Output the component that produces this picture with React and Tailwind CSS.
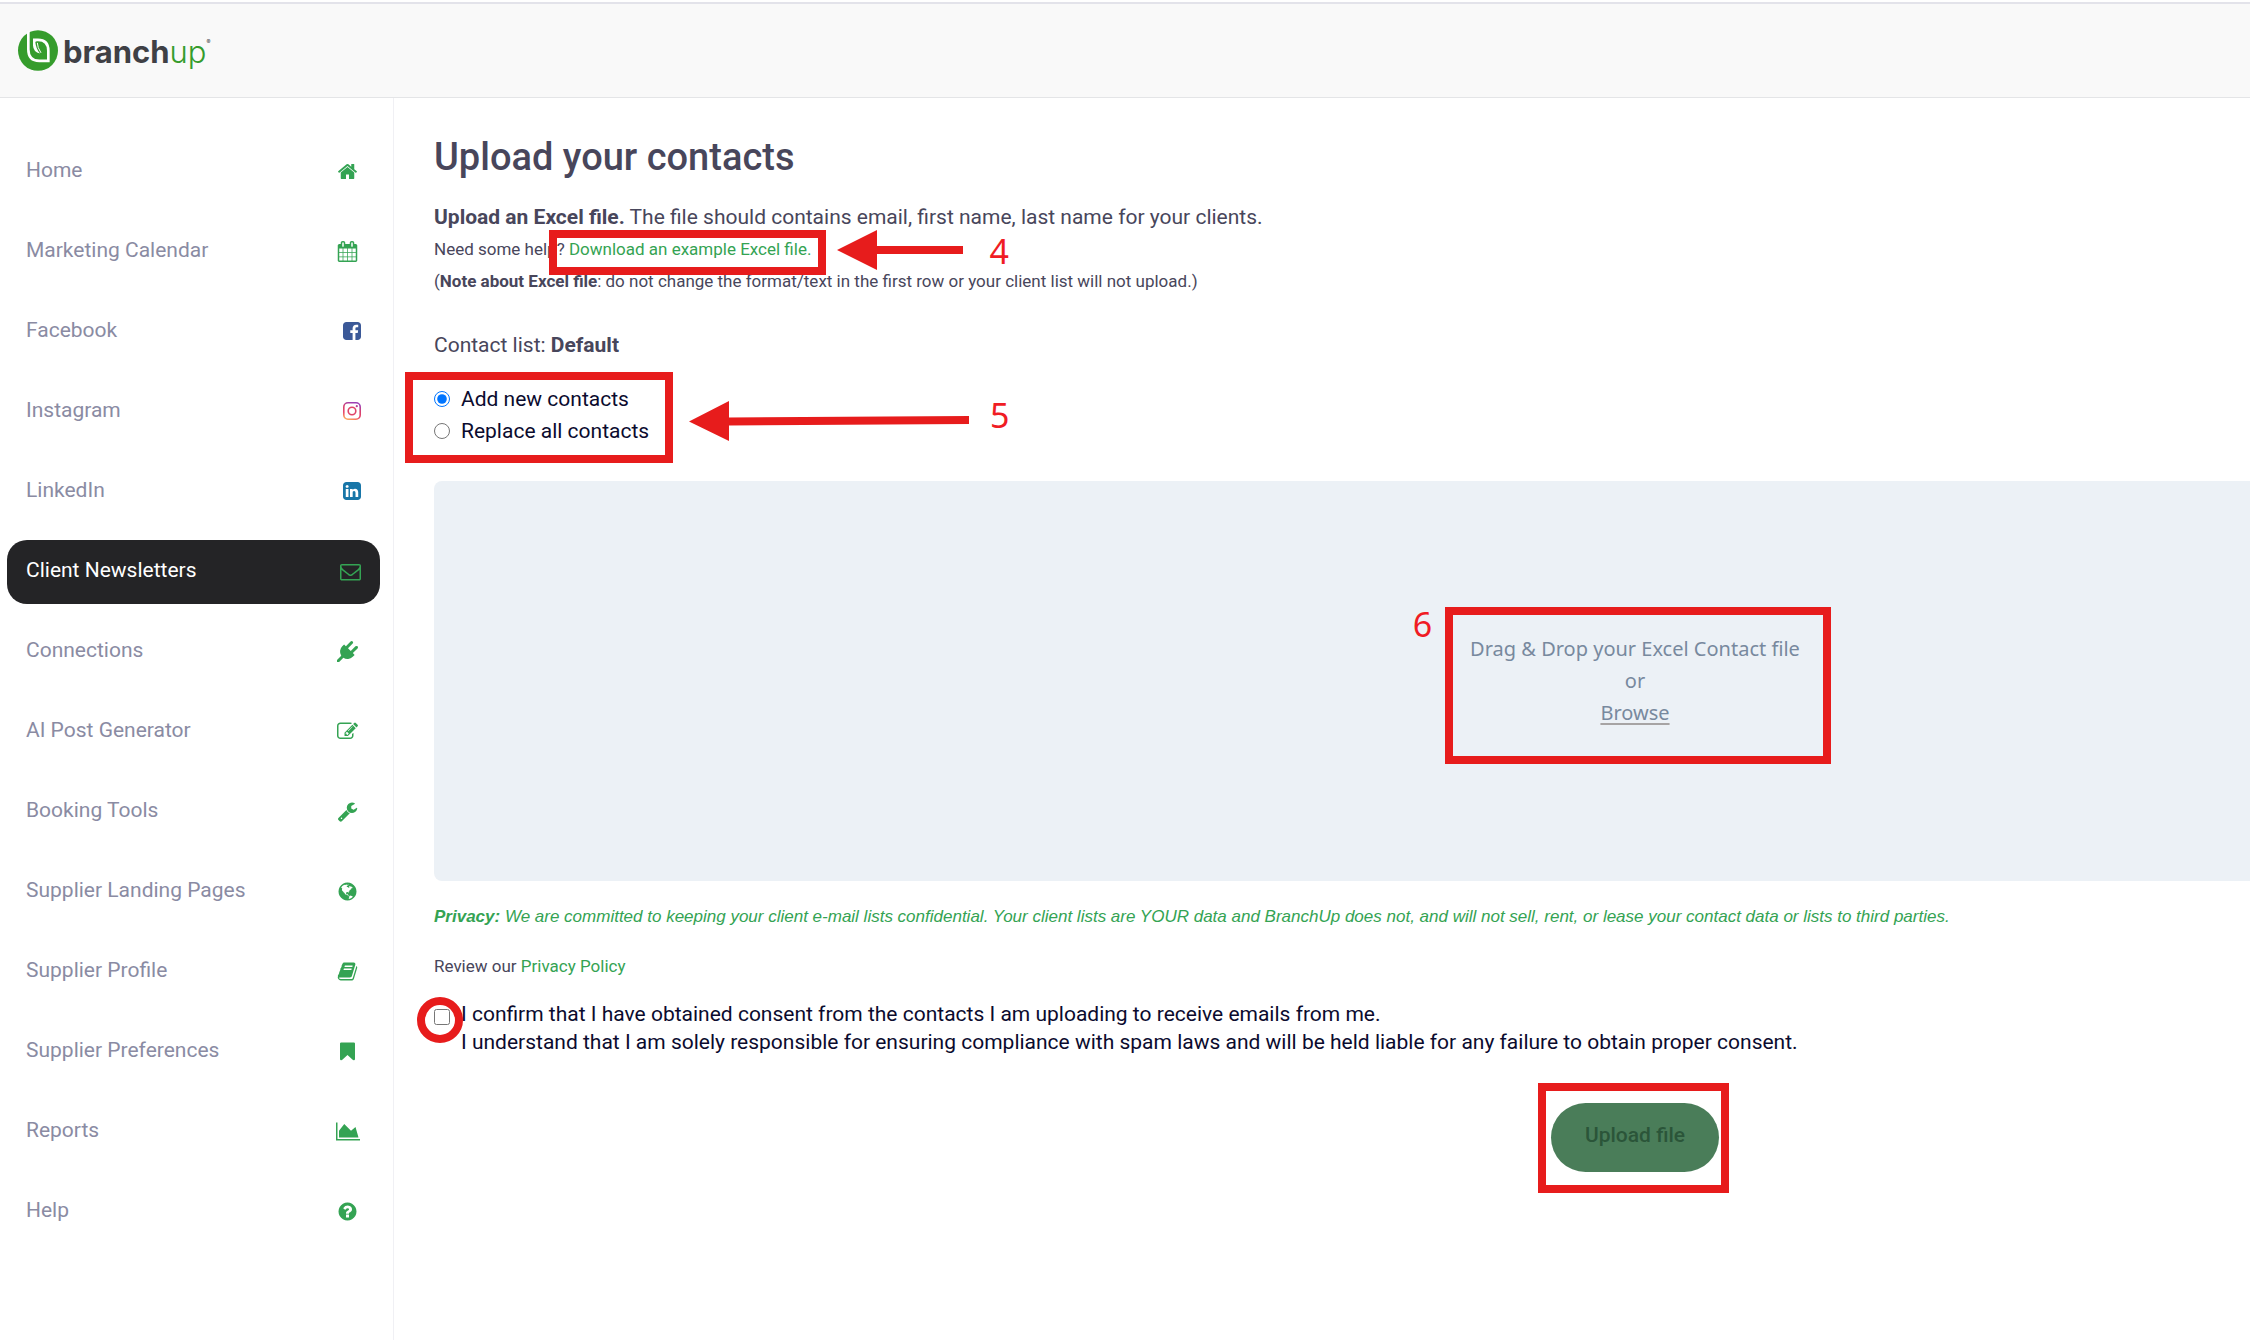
import React from "react";

const icons = {
  home: "M1472 992v480q0 26-19 45t-45 19h-384v-384h-256v384h-384q-26 0-45-19t-19-45v-480q0-1 .5-3t.5-3l575-474 575 474q1 2 1 6zm223-69l-62 74q-8 9-21 11h-3q-13 0-21-7l-692-577-692 577q-12 8-24 7-13-2-21-11l-62-74q-8-10-7-23.5t11-21.5l719-599q32-26 76-26t76 26l244 204v-195q0-14 9-23t23-9h192q14 0 23 9t9 23v408l219 182q10 8 11 21.5t-7 23.5z",
  calendar: "M192 1664h288v-288h-288v288zm352 0h320v-288h-320v288zm-352-352h288v-320h-288v320zm352 0h320v-320h-320v320zm-352-384h288v-288h-288v288zm736 736h320v-288h-320v288zm-384-736h320v-288h-320v288zm768 736h288v-288h-288v288zm-384-352h320v-320h-320v320zm-352-864v-288q0-13-9.5-22.5t-22.5-9.5h-64q-13 0-22.5 9.5t-9.5 22.5v288q0 13 9.5 22.5t22.5 9.5h64q13 0 22.5-9.5t9.5-22.5zm736 864h288v-320h-288v320zm-384-384h320v-288h-320v288zm384 0h288v-288h-288v288zm32-480v-288q0-13-9.5-22.5t-22.5-9.5h-64q-13 0-22.5 9.5t-9.5 22.5v288q0 13 9.5 22.5t22.5 9.5h64q13 0 22.5-9.5t9.5-22.5zm384-64v1280q0 52-38 90t-90 38h-1408q-52 0-90-38t-38-90v-1280q0-52 38-90t90-38h128v-96q0-66 47-113t113-47h64q66 0 113 47t47 113v96h384v-96q0-66 47-113t113-47h64q66 0 113 47t47 113v96h128q52 0 90 38t38 90z",
  facebook: "M1376 128q119 0 203.5 84.5t84.5 203.5v960q0 119-84.5 203.5t-203.5 84.5h-188v-595h199l30-232h-229v-148q0-56 23.5-84t91.5-28l122-1v-207q-63-9-178-9-136 0-217.5 80t-81.5 226v171h-200v232h200v595h-532q-119 0-203.5-84.5t-84.5-203.5v-960q0-119 84.5-203.5t203.5-84.5h960z",
  linkedin: "M365 1414h231v-694h-231v694zm246-908q-1-52-36-86t-93-34-94.5 34-36.5 86q0 51 35.5 85.5t92.5 34.5h1q59 0 95-34.5t36-85.5zm585 908h231v-398q0-154-73-233t-193-79q-136 0-209 117h2v-101h-231q3 66 0 694h231v-388q0-38 7-56 15-35 45-59.5t74-24.5q116 0 116 157v371zm468-998v960q0 119-84.5 203.5t-203.5 84.5h-960q-119 0-203.5-84.5t-84.5-203.5v-960q0-119 84.5-203.5t203.5-84.5h960q119 0 203.5 84.5t84.5 203.5z",
  envelope: "M1664 1504v-768q-32 36-69 66-268 206-426 338-51 43-83 67t-86.5 48.5-102.5 24.5h-2q-48 0-102.5-24.5t-86.5-48.5-83-67q-158-132-426-338-37-30-69-66v768q0 13 9.5 22.5t22.5 9.5h1472q13 0 22.5-9.5t9.5-22.5zm0-1051v-24.5l-.5-13-3-12.5-5.5-9-9-7.5-14-2.5h-1472q-13 0-22.5 9.5t-9.5 22.5q0 168 147 284 193 152 401 317 6 5 35 29.5t46 37.5 44.5 31.5 50.5 27.5 43 9h2q20 0 43-9t50.5-27.5 44.5-31.5 46-37.5 35-29.5q208-165 401-317 54-43 100.5-115.5t46.5-131.5zm128-37v1088q0 66-47 113t-113 47h-1472q-66 0-113-47t-47-113v-1088q0-66 47-113t113-47h1472q66 0 113 47t47 113z",
  plug: "M1755 453q37 38 37 90.5t-37 90.5l-401 400 150 150-160 160q-163 163-389.5 186.5t-411.5-100.5l-362 362h-181v-181l362-362q-124-185-100.5-411.5t186.5-389.5l160-160 150 150 400-401q38-37 91-37t90 37 37 90.5-37 90.5l-400 401 234 234 401-400q38-37 91-37t90 37z",
  edit: "M888 1184l116-116-152-152-116 116v56h96v96h56zm440-720q-16-16-33 1l-350 350q-17 17-1 33t33-1l350-350q17-17 1-33zm80 594v190q0 119-84.5 203.5t-203.5 84.5h-832q-119 0-203.5-84.5t-84.5-203.5v-832q0-119 84.5-203.5t203.5-84.5h832q63 0 117 25 15 7 18 23 3 17-9 29l-49 49q-14 14-32 8-23-6-45-6h-832q-66 0-113 47t-47 113v832q0 66 47 113t113 47h832q66 0 113-47t47-113v-126q0-13 9-22l64-64q15-15 35-7t20 29zm-96-738l288 288-672 672h-288v-288zm444 132l-92 92-288-288 92-92q28-28 68-28t68 28l152 152q28 28 28 68t-28 68z",
  wrench: "M448 1472q0-26-19-45t-45-19-45 19-19 45 19 45 45 19 45-19 19-45zm644-420l-682 682q-37 37-90 37-52 0-91-37l-106-108q-38-36-38-90 0-53 38-91l681-681q39 98 114.5 173.5t173.5 114.5zm634-435q0 39-23 106-47 134-164.5 217.5t-258.5 83.5q-185 0-316.5-131.5t-131.5-316.5 131.5-316.5 316.5-131.5q58 0 121.5 16.5t107.5 46.5q16 11 16 28t-16 28l-293 169v224l193 107q5-3 79-48.5t135.5-81 70.5-35.5q15 0 23.5 10t8.5 25z",
  globe: "M896 128q209 0 385.5 103t279.5 279.5 103 385.5-103 385.5-279.5 279.5-385.5 103-385.5-103-279.5-279.5-103-385.5 103-385.5 279.5-279.5 385.5-103zm274 521q-2 1-9.5 9.5t-13.5 9.5q2 0 4.5-5t5-11 3.5-7q6-7 22-15 14-6 52-12 34-8 51 11-2-2 9.5-13t14.5-12q3-2 15-4.5t15-7.5l2-22q-12 1-17.5-7t-6.5-21q0 2-6 8 0-7-4.5-8t-11.5 1-9 1q-10-3-15-7.5t-8-16.5-4-15q-2-5-9.5-10.5t-9.5-10.5q-1-2-2.5-5.5t-3-6.5-4-5.5-5.5-2.5-7 5-7.5 10-4.5 5q-3-2-6-1.5t-4.5 1-4.5 3-5 3.5q-3 2-8.5 3t-8.5 2q15-5-1-11-10-4-16-3 9-4 7.5-12t-8.5-14h5q-1-4-8.5-8.5t-17.5-8.5-13-6q-8-5-34-9.5t-33-.5q-5 6-4.5 10.5t4 14 3.5 12.5q1 6-5.5 13t-6.5 12q0 7 14 15.5t10 21.5q-3 8-16 16t-16 12q-5 8-1.5 18.5t10.5 16.5q2 2 1.5 4t-3.5 4.5-5.5 4-6.5 3.5l-3 2q-11 5-20.5-6t-13.5-26q-7-25-16-30-23-8-29 1-5-13-41-26-25-9-58-4 6-1 0-15-7-15-19-12 3-6 4-17.5t1-13.5q3-13 12-23 1-1 7-8.5t9.5-13.5.5-6q35 4 50-11 5-5 11.5-17t10.5-17q9-6 14-5.5t14.5 5.5 14.5 5q14 1 15.5-11t-7.5-20q12 1 3-17-4-7-8-9-12-4-27 5-8 4 2 8-1-1-9.5 10.5t-16.5 17.5-16-5q-1-1-5.5-13.5t-9.5-13.5q-8 0-16 15 3-8-11-15t-24-8q19-12-8-27-7-4-20.5-5t-19.5 4q-5 7-5.5 11.5t5 8 10.5 5.5 11.5 4 8.5 3q14 10 8 14-2 1-8.5 3.5t-11.5 4.5-6 4q-3 4 0 14t-2 14q-5-5-9-17.5t-7-16.5q7 9-25 6l-10-1q-4 0-16 2t-20.5 1-13.5-8q-4-8 0-20 1-4 4-2-4-3-11-9.5t-10-8.5q-46 15-94 41 6 1 12-1 5-2 13-6.5t10-5.5q34-14 42-7l5-5q14 16 20 25-7-4-30-1-20 6-22 12 7 12 5 18-4-3-11.5-10t-14.5-11-15-5q-16 0-22 1-146 80-235 222 7 7 12 8 4 1 5 9t2.5 11 11.5-3q9 8 3 19 1-1 44 27 19 17 21 21 3 11-10 18-1-2-9-9t-9-4q-3 5 .5 18.5t10.5 12.5q-7 0-9.5 16t-2.5 35.5-1 23.5l2 1q-3 12 5.5 34.5t21.5 19.5q-13 3 20 43 6 8 8 9 3 2 12 7.5t15 10 10 10.5q4 5 10 22.5t14 23.5q-2 6 9.5 20t10.5 23q-1 0-2.5 1t-2.5 1q3 7 15.5 14t15.5 13q1 3 2 10t3 11 8 2q2-20-24-62-15-25-17-29-3-5-5.5-15.5t-4.5-14.5q2 0 6 1.5t8.5 3.5 7.5 4 2 3q-3 7 2 17.5t12 18.5 17 19 12 13q6 6 14 19.5t0 13.5q9 0 20 10.5t17 19.5q5 8 8 26t5 24q2 7 8.5 13.5t12.5 9.5l16 8 13 7q5 2 18.5 10.5t21.5 11.5q10 4 16 4t14.5-2.5 13.5-3.5q15-2 29 15t21 21q36 19 55 11-2 1 .5 7.5t8 15.5 9 14.5 5.5 8.5q5 6 18 15t18 15q6-4 7-9-3 8 7 20t18 10q14-3 14-32-31 15-49-18 0-1-2.5-5.5t-4-8.5-2.5-8.5 0-7.5 5-3q9 0 10-3.5t-2-12.5-4-13q-1-8-11-20t-12-15q-5 9-16 8t-16-9q0 1-1.5 5.5t-1.5 6.5q-13 0-15-1 1-3 2.5-17.5t3.5-22.5q1-4 5.5-12t7.5-14.5 4-12.5-4.5-9.5-17.5-2.5q-19 1-26 20-1 3-3 10.5t-5 11.5-9 7q-7 3-24 2t-24-5q-13-8-22.5-29t-9.5-37q0-10 2.5-26.5t3-25-5.5-24.5q3-2 9-9.5t10-10.5q2-1 4.5-1.5t4.5 0 4-1.5 3-6q-1-1-4-3-3-3-4-3 7 3 28.5-1.5t27.5 1.5q15 11 22-2 0-1-2.5-9.5t-.5-13.5q5 27 29 9 3 3 15.5 5t17.5 5q3 2 7 5.5t5.5 4.5 5-.5 8.5-6.5q10 14 12 24 11 40 19 44 7 3 11 2t4.5-9.5 0-14-1.5-12.5l-1-8v-18l-1-8q-15-3-18.5-12t1.5-18.5 15-18.5q1-1 8-3.5t15.5-6.5 12.5-8q21-19 15-35 7 0 11-9-1 0-5-3t-7.5-5-4.5-2q9-5 2-16 5-3 7.5-11t7.5-10q9 12 21 2 8-8 1-16 5-7 20.5-10.5t18.5-9.5q7 2 8-2t1-12 3-12q4-5 15-9t13-5l17-11q3-4 0-4 18 2 31-11 10-11-6-20 3-6-3-9.5t-15-5.5q3-1 11.5-.5t10.5-1.5q15-10-7-16-17-5-43 12zm-163 877q206-36 351-189-3-3-12.5-4.5t-12.5-3.5q-18-7-24-8 1-7-2.5-13t-8-9-12.5-8-11-7q-2-2-7-6t-7-5.5-7.5-4.5-8.5-2-10 1l-3 1q-3 1-5.5 2.5t-5.5 3-4 3 0 2.5q-21-17-36-22-5-1-11-5.5t-10.5-7-10-1.5-11.5 7q-5 5-6 15t-2 13q-7-5 0-17.5t2-18.5q-3-6-10.5-4.5t-12 4.5-11.5 8.5-9 6.5-8.5 5.5-8.5 7.5q-3 4-6 12t-5 11q-2-4-11.5-6.5t-9.5-5.5q2 10 4 35t5 38q7 31-12 48-27 25-29 40-4 22 12 26 0 7-8 20.5t-7 21.5q0 6 2 16z",
  book: "M1703 478q40 57 18 129l-275 906q-19 64-76.5 107.5t-122.5 43.5h-923q-77 0-148.5-53.5t-99.5-131.5q-24-67-2-127 0-4 3-27t4-37q1-8-3-21.5t-3-19.5q2-11 8-21t16.5-23.5 16.5-23.5q23-38 45-91.5t30-91.5q3-10 .5-30t-.5-28q3-11 17-28t17-23q21-36 42-92t25-90q1-9-2.5-32t.5-28q4-13 22-30.5t22-22.5q19-26 42.5-84.5t27.5-96.5q1-8-3-25.5t-2-26.5q2-8 9-18t18-23 17-21q8-12 16.5-30.5t15-35 16-36 19.5-32 26.5-23.5 36-11.5 47.5 5.5l-1 3q38-9 51-9h761q74 0 114 56t18 130l-274 906q-36 119-71.5 153.5t-128.5 34.5h-869q-27 0-38 15-11 16-1 43 24 70 144 70h923q29 0 56-15.5t35-41.5l300-987q7-22 5-57 38 15 59 43zm-1064 2q-4 13 2 22.5t20 9.5h608q13 0 25.5-9.5t16.5-22.5l21-64q4-13-2-22.5t-20-9.5h-608q-13 0-25.5 9.5t-16.5 22.5zm-83 256q-4 13 2 22.5t20 9.5h608q13 0 25.5-9.5t16.5-22.5l21-64q4-13-2-22.5t-20-9.5h-608q-13 0-25.5 9.5t-16.5 22.5z",
  bookmark: "M1420 128q23 0 44 9 33 13 52.5 41t19.5 62v1289q0 34-19.5 62t-52.5 41q-19 8-44 8-48 0-83-32l-441-424-441 424q-36 33-83 33-23 0-44-9-33-13-52.5-41t-19.5-62v-1289q0-34 19.5-62t52.5-41q21-9 44-9h1048z",
  chart: "M2048 1536v128h-2048v-1536h128v1408h1920zm-384-1024l256 896h-1664v-576l448-576 576 576z",
  help: "M1024 1376v-192q0-14-9-23t-23-9h-192q-14 0-23 9t-9 23v192q0 14 9 23t23 9h192q14 0 23-9t9-23zm256-672q0-88-55.5-163t-138.5-116-170-41q-243 0-371 213-15 24 8 42l132 100q7 6 19 6 16 0 25-12 53-68 86-92 34-24 86-24 48 0 85.5 26t37.5 59q0 38-20 61t-68 45q-63 28-115.5 86.5t-52.5 125.5v36q0 14 9 23t23 9h192q14 0 23-9t9-23q0-19 21.5-49.5t54.5-49.5q32-18 49-28.5t46-35 44.5-48 28-60.5 12.5-81zm384 192q0 209-103 385.5t-279.5 279.5-385.5 103-385.5-103-279.5-279.5-103-385.5 103-385.5 279.5-279.5 385.5-103 385.5 103 279.5 279.5 103 385.5z",
};

const items = [
  { label: "Home", icon: "home" },
  { label: "Marketing Calendar", icon: "calendar" },
  { label: "Facebook", icon: "facebook", brand: true, color: "text-[#3b5998]" },
  { label: "Instagram", icon: "instagram", brand: true },
  { label: "LinkedIn", icon: "linkedin", brand: true, color: "text-[#1876a8]" },
  { label: "Client Newsletters", icon: "envelope", active: true },
  { label: "Connections", icon: "plug" },
  { label: "AI Post Generator", icon: "edit" },
  { label: "Booking Tools", icon: "wrench" },
  { label: "Supplier Landing Pages", icon: "globe" },
  { label: "Supplier Profile", icon: "book" },
  { label: "Supplier Preferences", icon: "bookmark" },
  { label: "Reports", icon: "chart" },
  { label: "Help", icon: "help" },
];

function InstagramIcon() {
  return (
    <svg viewBox="0 0 18 18" className="size-[18px]" fill="none" aria-hidden="true">
      <defs>
        <linearGradient id="ig" x1="0.25" y1="1" x2="0.6" y2="0">
          <stop offset="0" stopColor="#fba45c" />
          <stop offset="0.3" stopColor="#e8486a" />
          <stop offset="0.65" stopColor="#d6406f" />
          <stop offset="1" stopColor="#9b3fb5" />
        </linearGradient>
      </defs>
      <rect x="0.8" y="0.8" width="16.4" height="16.4" rx="4.2" stroke="url(#ig)" strokeWidth="1.6" />
      <circle cx="9" cy="9" r="3.8" stroke="#df4468" strokeWidth="1.6" />
      <circle cx="13.8" cy="4.2" r="1.1" fill="#b93f95" />
    </svg>
  );
}

function NavIcon({ item }) {
  if (item.icon === "instagram") return <InstagramIcon />;
  if (item.brand) {
    return (
      <svg viewBox="128 128 1536 1536" className={"size-[18px] fill-current " + item.color} aria-hidden="true">
        <path d={icons[item.icon]} />
      </svg>
    );
  }
  const wide = item.icon === "chart";
  return (
    <span className={item.active ? "flex text-[#34a353]" : "flex w-[27px] justify-center text-[#34a353]"}>
      <svg
        viewBox={wide ? "0 0 2048 1792" : "0 0 1792 1792"}
        className={wide ? "h-[21px] w-6 fill-current" : "size-[21px] fill-current"}
        aria-hidden="true"
      >
        <path d={icons[item.icon]} />
      </svg>
    </span>
  );
}

function Logo() {
  return (
    <a href="#home" className="flex items-center gap-[5px]" aria-label="branchup">
      <svg viewBox="0 0 120 122" className="h-[41px] w-10" aria-hidden="true">
        <ellipse cx="60" cy="61" rx="60" ry="61" fill="#359c2c" />
        <path d="M31 4V58Q31 92 64 92H91V62Q91 29 60 29H49" fill="none" stroke="#fff" strokeWidth="8" />
        <path d="M45 25V46Q46 66 66 70Q54 56 52 36Q52 33 56 33L49 25Z" fill="#fff" />
        <path d="M58 38Q58 52 69 68" fill="none" stroke="#fff" strokeWidth="3" />
      </svg>
      <span className="flex items-start pt-0.5 font-[Inter,sans-serif] text-[31px] leading-9 text-[#3f4045]">
        <span className="font-bold">branch</span>
        <span className="font-light text-[#359c2c]">up</span>
        <span className="text-[6px] leading-4">®</span>
      </span>
    </a>
  );
}

const outline = "pointer-events-none absolute border-8 border-[#e71c1c]";
const stepNumber = "pointer-events-none absolute font-['Noto_Sans',sans-serif] text-[34px] leading-8 text-[#f01c24]";

export default function App() {
  return (
    <div className="flex min-h-screen flex-col overflow-hidden bg-white font-[Roboto,sans-serif] text-[21px] leading-8 text-[#48465b]">
      <header className="mt-0.5 flex h-24 items-center border-t-2 border-b border-t-[#e3e3ea] border-b-[#e4e5e7] bg-[#f9f9f9] px-[18px]">
        <Logo />
      </header>

      <div className="flex grow">
        <aside className="w-[394px] shrink-0 border-r border-[#f0f0f4] pt-[42px] pr-[13px] pl-[7px]">
          <nav className="flex flex-col gap-4">
            {items.map((item) => (
              <a
                key={item.label}
                href="#nav"
                className={
                  item.active
                    ? "flex h-16 items-center justify-between rounded-[20px] bg-[#242426] px-[19px] pb-0.5 text-white"
                    : "flex h-16 items-center justify-between px-[19px] pb-0.5 text-[#8a8ba3]"
                }
              >
                <span className="pb-0.5">{item.label}</span>
                <NavIcon item={item} />
              </a>
            ))}
          </nav>
        </aside>

        <main className="min-w-0 grow pt-[35px] pl-10">
          <div className="min-w-[2402px]">
            <h1 className="text-[38px] leading-[48px] font-medium">Upload your contacts</h1>

            <div className="mt-5 text-[17px]">
              <p className="text-[21px]">
                <b>Upload an Excel file.</b> The file should contains email, first name, last name for your clients.
              </p>
              <p>
                Need some help?{" "}
                <span className="relative inline-block">
                  <a href="#example" className="text-[#34a353]">Download an example Excel file.</a>
                  <span className={outline + " -top-[3px] -right-[15px] -bottom-2.5 -left-5"} />
                  <svg viewBox="0 0 126 40" className="pointer-events-none absolute top-[-3px] left-full ml-[26px] h-10 w-[126px] max-w-none" fill="#e71c1c" aria-hidden="true">
                    <path d="M0 20L40 0V16H126V24H40V40Z" />
                  </svg>
                  <span className={stepNumber + " top-0.5 left-full ml-[178px]"}>4</span>
                </span>
              </p>
              <p>
                (<b>Note about Excel file</b>: do not change the format/text in the first row or your client list will not upload.)
              </p>
            </div>

            <p className="mt-8">
              Contact list: <b>Default</b>
            </p>

            <fieldset className="relative mt-[22px] w-[219px] text-[#0b0b2e]">
              <label className="flex items-center gap-[11px]">
                <input type="radio" name="mode" defaultChecked className="size-4 accent-[#0075ff]" />
                Add new contacts
              </label>
              <label className="flex items-center gap-[11px]">
                <input type="radio" name="mode" className="size-4 accent-[#0075ff]" />
                Replace all contacts
              </label>
              <span className={outline + " -top-[11px] -right-5 -bottom-4 -left-[29px]"} />
              <svg viewBox="0 0 280 40" className="pointer-events-none absolute top-[18px] left-full ml-9 h-10 w-[280px] max-w-none" fill="#e71c1c" aria-hidden="true">
                <path d="M0 20.500L40 0V16.500L280 15V23L40 24.500V40Z" />
              </svg>
              <span className={stepNumber + " top-4 left-full ml-[337px]"}>5</span>
            </fieldset>

            <section className="mt-[34px] flex h-[400px] items-center justify-center rounded-lg bg-[#ecf1f6] font-['Noto_Sans',sans-serif] text-[20px] text-[#78899e]">
              <div className="relative text-center">
                <p>Drag &amp; Drop your Excel Contact file</p>
                <p>or</p>
                <button type="button" className="underline decoration-[#a7a4a4] decoration-2 underline-offset-3">Browse</button>
                <span className={outline + " -top-[26px] -right-[31px] -bottom-[35px] -left-[25px]"} />
                <span className={stepNumber + " right-full -top-[25px] mr-[38px]"}>6</span>
              </div>
            </section>

            <p className="mt-5 font-['Liberation_Sans',sans-serif] text-[17px] text-[#34a353] italic">
              <b>Privacy:</b> We are committed to keeping your client e-mail lists confidential. Your client lists are YOUR data and BranchUp does not, and will not sell, rent, or lease your contact data or lists to third parties.
            </p>
            <p className="mt-[17px] text-[17px]">
              Review our <a href="#privacy" className="text-[#34a353]">Privacy Policy</a>
            </p>

            <label className="relative mt-[18px] flex items-start gap-[11px] leading-7 text-[#0b0b2e]">
              <input type="checkbox" className="mt-[9px] size-4" />
              <span>
                I confirm that I have obtained consent from the contacts I am uploading to receive emails from me.
                <br />I understand that I am solely responsible for ensuring compliance with spam laws and will be held liable for any failure to obtain proper consent.
              </span>
              <span className={outline + " -top-[3px] -left-[17px] size-[46px] rounded-full"} />
            </label>

            <div className="mt-[47px] flex justify-center">
              <div className="relative">
                <button type="button" className="h-[69px] w-[168px] rounded-[35px] bg-[#4a7d59] pb-1.5 font-medium text-[#2b5539]">
                  Upload file
                </button>
                <span className={outline + " -top-5 -right-2.5 -bottom-[21px] -left-[13px]"} />
              </div>
            </div>
          </div>
        </main>
      </div>
    </div>
  );
}
